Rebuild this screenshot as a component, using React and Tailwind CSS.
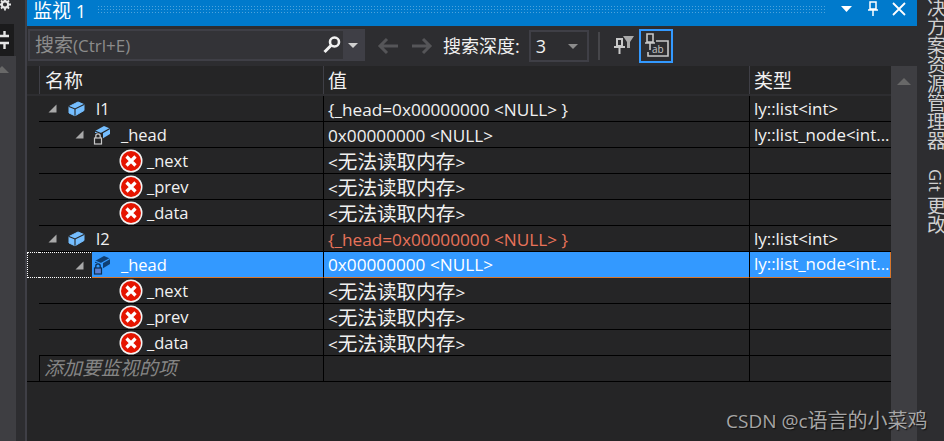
import React from 'react';

function Triangle() {
    return (
        <svg width="9" height="9" viewBox="0 0 9 9" className="shrink-0">
            <polygon points="8.5,0.5 8.5,8.5 0.5,8.5" fill="#a9a9a9" />
        </svg>
    );
}

function Cube() {
    return (
        <svg width="17" height="16" viewBox="0 0 17 16" className="shrink-0">
            <polygon points="1,5.5 10,1 16,3.5 16,9.5 7,14.8 1,12" fill="#75beff" stroke="#75beff" strokeLinejoin="round" />
            <polyline points="1,5.5 7,8 16,3.5" fill="none" stroke="#252526" strokeWidth="1.1" />
            <line x1="7" y1="8" x2="7" y2="14.8" stroke="#252526" strokeWidth="1.1" />
        </svg>
    );
}

function LockedCube({ selected }) {
    const c = selected ? '#0f3f73' : '#75beff';
    const line = selected ? '#3399ff' : '#252526';
    return (
        <svg width="18" height="20" viewBox="0 0 18 20" className="shrink-0">
            <polygon points="2,6 11,1 17,3.5 17,9 8,14.5 2,12" fill={c} />
            <polyline points="2,6 8,8.5 17,3.5" fill="none" stroke={line} strokeWidth="1.2" />
            <rect x="0" y="8" width="10" height="12" fill={selected ? '#3399ff' : '#252526'} />
            <path d="M2.8 13v-2a2.2 2.2 0 0 1 4.4 0v2" fill="none" stroke={selected ? '#0b2d52' : '#c8c8c8'} strokeWidth="1.3" />
            <rect x="1.5" y="13" width="7" height="6" fill={selected ? '#5b7fd0' : '#252526'} stroke={selected ? '#0b2d52' : '#c8c8c8'} strokeWidth="1.2" />
        </svg>
    );
}

function ErrorIcon() {
    return (
        <svg width="24" height="24" viewBox="0 0 24 24" className="shrink-0">
            <circle cx="12" cy="12" r="11.5" fill="#f4f4f4" />
            <circle cx="12" cy="12" r="10" fill="#e51400" />
            <path d="M7.5 7.5l9 9M16.5 7.5l-9 9" stroke="#fff" strokeWidth="3.2" />
        </svg>
    );
}

// CJK runs sit larger than the latin text next to them
function Cn({ children }) {
    return <span className="text-[19px]">{children}</span>;
}

function Row({ level, arrow, icon, name, value, type, valueColor = 'text-[#f1f1f1]', selected }) {
    const nudge = selected ? '' : 'pt-[2px]';
    return (
        <div className={`flex h-[26px] shrink-0 ${selected ? 'text-white' : 'text-[#f1f1f1]'}`}>
            <div className={`w-[12px] shrink-0 ${selected ? 'border-y border-l border-dotted border-white' : ''}`} />
            <div className={`w-[284px] shrink-0 flex items-center relative text-[16.5px] ${selected ? 'border-y border-r-0 border-dotted border-white' : 'border-b border-black'}`}>
                {selected && <div className="absolute left-[53px] right-0 -top-px -bottom-px bg-[#3399ff] border-b border-[#d9762b]" />}
                <div className={`relative flex items-center ${level === 0 ? 'pl-[9px]' : 'pl-[36px]'} ${arrow ? '' : 'invisible'}`}>
                    <Triangle />
                </div>
                {icon === 'cube' && <div className="relative ml-[11px]"><Cube /></div>}
                {icon === 'locked' && <div className="relative ml-[9px]"><LockedCube selected={selected} /></div>}
                {icon === 'error' && <div className="relative ml-[35px]"><ErrorIcon /></div>}
                <span className={`relative ${nudge} ${icon === 'cube' ? 'ml-[11px]' : icon === 'locked' ? 'ml-[10px]' : 'ml-[4px]'}`}>{name}</span>
            </div>
            <div className={`w-[426px] shrink-0 pl-[4px] flex items-center border-l text-[17.2px] ${selected ? 'bg-[#3399ff] border-black border-b border-b-[#d9762b]' : 'border-black border-b'} ${valueColor}`}>
                <span className={nudge}>{value}</span>
            </div>
            <div className={`flex-1 min-w-0 pl-[4px] flex items-center overflow-hidden whitespace-nowrap border-l text-[16.9px] ${selected ? 'bg-[#3399ff] border-black border-b border-b-[#d9762b] border-r border-r-[#d9762b]' : 'border-black border-b'}`}>
                <span className={nudge}>{type}</span>
            </div>
        </div>
    );
}

const NOREAD = <>&lt;<span className="text-[19.6px]">无法读取内存</span>&gt;</>;

function Children() {
    return (
        <>
            <Row level={2} icon="error" name="_next" value={NOREAD} />
            <Row level={2} icon="error" name="_prev" value={NOREAD} />
            <Row level={2} icon="error" name="_data" value={NOREAD} />
        </>
    );
}

export default function App() {
    return (
        <div className="relative w-[944px] h-[441px] flex overflow-hidden bg-[#2d2d30] text-[16px] leading-none font-['Open_Sans','Noto_Sans_CJK_SC',sans-serif] text-[#f1f1f1]">
            {/* left dock strip */}
            <div className="w-[25px] shrink-0 flex flex-col">
                <div className="h-[24px] overflow-hidden">
                    <svg width="12" height="13" viewBox="0 0 12 13">
                        <circle cx="5" cy="4.5" r="3.2" fill="none" stroke="#e6e6e6" strokeWidth="2.2" />
                        <path d="M5 -1v2M5 8v2.5M-0.5 4.5h2M8.5 4.5h2.5M1 0.5l1.5 1.5M7.5 7l1.5 1.5M9 0.5L7.5 2M2.5 7L1 8.5" stroke="#e6e6e6" strokeWidth="1.8" />
                    </svg>
                </div>
                <div className="h-[32px] w-[14px] bg-[#1b1b1c] flex items-center">
                    <svg width="10" height="20" viewBox="0 0 10 20">
                        <path d="M0 6h9M0 13h9M4.5 1v5M4.5 13v6" stroke="#e6e6e6" strokeWidth="2.4" />
                    </svg>
                </div>
                <div className="flex-1 w-[16px] bg-[#3e3e42] pt-[10px]">
                    <div className="w-0 h-0 border-x-[7px] border-x-transparent border-b-[7px] border-b-[#686868] ml-[-5px]" />
                </div>
            </div>
            <div className="w-[2px] shrink-0 bg-[#3f3f46]" />

            {/* watch panel */}
            <div className="w-[890px] shrink-0 flex flex-col">
                <div className="h-[26px] shrink-0 bg-[#007acc] flex items-center pl-[6px] text-white">
                    <span className="w-[64px] shrink-0 -mt-[3px] text-[18px]"><span className="text-[19px]">监视</span> 1</span>
                    <div className="w-[730px] h-[8px] -mt-[8px] bg-[radial-gradient(#4da3dc_1px,transparent_1px)] bg-[length:3px_3px]" />
                    <svg width="12" height="8" viewBox="0 0 12 8" className="ml-[14px] -mt-[8px]"><polygon points="0,1 11,1 5.5,7" fill="#fff" /></svg>
                    <svg width="12" height="16" viewBox="0 0 12 16" className="ml-[14px] -mt-[8px]"><path d="M3 1h6v7H3zM1 9h10M6 9v6" fill="none" stroke="#fff" strokeWidth="1.5" /></svg>
                    <svg width="14" height="14" viewBox="0 0 14 14" className="ml-[13px] -mt-[8px]"><path d="M1 1l12 12M13 1L1 13" stroke="#fff" strokeWidth="1.8" /></svg>
                </div>

                {/* toolbar */}
                <div className="h-[40px] shrink-0 flex items-center bg-[#2d2d30]">
                    <div className="ml-px w-[337px] h-[32px] bg-[#333337] border-2 border-[#3f3f46] flex items-center pl-[5px] text-[#8c8c8c] -mt-[2px]">
                        <span className="flex-1 text-[17px]"><Cn>搜索</Cn>(Ctrl+E)</span>
                        <svg width="20" height="20" viewBox="0 0 20 20" className="mr-[1px]">
                            <circle cx="12.5" cy="7" r="4.5" fill="none" stroke="#f1f1f1" strokeWidth="2.6" />
                            <path d="M9 10.5l-6.5 6.5" stroke="#f1f1f1" strokeWidth="3" />
                        </svg>
                        <div className="w-[20px] h-[32px] -my-[2px] bg-[#3f3f46] flex items-center justify-center">
                            <div className="w-0 h-0 border-x-[5px] border-x-transparent border-t-[5px] border-t-[#d0d0d0]" />
                        </div>
                    </div>
                    <svg width="24" height="20" viewBox="0 0 24 20" className="ml-[11px]"><path d="M22 10H4M11 3l-7 7 7 7" fill="none" stroke="#555558" strokeWidth="3" /></svg>
                    <svg width="24" height="20" viewBox="0 0 24 20" className="ml-[10px]"><path d="M2 10h18M13 3l7 7-7 7" fill="none" stroke="#555558" strokeWidth="3" /></svg>
                    <span className="ml-[9px] text-[18px] text-[#f1f1f1]">搜索深度:</span>
                    <div className="ml-[9px] w-[60px] h-[32px] border-2 border-[#3f3f46] flex items-center justify-between pl-[5px] pr-[9px] text-[18px]">
                        <span>3</span>
                        <div className="w-0 h-0 border-x-[5px] border-x-transparent border-t-[5px] border-t-[#8c8c8c]" />
                    </div>
                    <div className="ml-[9px] w-[2px] h-[28px] bg-[#46464a]" />
                    <svg width="24" height="24" viewBox="0 0 24 24" className="ml-[12px]">
                        <path d="M11 2h11l-4 6v6h-3V8z" fill="#a9a9a9" />
                        <path d="M5 5h5v7H5zM2 13h11M7.5 13v7" fill="none" stroke="#c8c8c8" strokeWidth="2" />
                    </svg>
                    <div className="ml-[3px] w-[34px] h-[34px] border-2 border-[#3399ff] flex items-center justify-center">
                        <svg width="26" height="28" viewBox="0 0 26 28">
                            <path d="M4 2h6v8H4zM2 11h10M7 11v7" fill="none" stroke="#c8c8c8" strokeWidth="1.6" />
                            <path d="M13 9h12v15H5v-4" fill="none" stroke="#c8c8c8" strokeWidth="1.6" />
                            <text x="9" y="21" fontSize="10" fill="#c8c8c8">ab</text>
                        </svg>
                    </div>
                </div>

                {/* table */}
                <div className="flex-1 flex bg-[#252526] min-h-0">
                    <div className="w-[864px] shrink-0 flex flex-col">
                        <div className="h-[30px] shrink-0 flex border-b-2 border-[#2d2d30] text-[#f1f1f1] text-[19px]">
                            <div className="w-[12px] shrink-0" />
                            <div className="w-[284px] shrink-0 border-l border-[#3f3f46] pl-[5px] pt-[2px] flex items-center">名称</div>
                            <div className="w-[426px] shrink-0 border-l border-[#3f3f46] pl-[4px] pt-[2px] flex items-center">值</div>
                            <div className="flex-1 border-l border-[#3f3f46] pl-[4px] pt-[2px] flex items-center">类型</div>
                        </div>
                        <Row level={0} arrow icon="cube" name="l1" value="{_head=0x00000000 <NULL> }" type="ly::list<int>" />
                        <Row level={1} arrow icon="locked" name="_head" value="0x00000000 <NULL>" type="ly::list_node<int..." />
                        <Children />
                        <Row level={0} arrow icon="cube" name="l2" value="{_head=0x00000000 <NULL> }" valueColor="text-[#e8735a]" type="ly::list<int>" />
                        <Row level={1} arrow icon="locked" name="_head" value="0x00000000 <NULL>" type="ly::list_node<int..." valueColor="text-white" selected />
                        <Children />
                        <div className="h-[26px] shrink-0 flex border-b border-black">
                            <div className="w-[12px] shrink-0" />
                            <div className="w-[284px] shrink-0 border-l border-black pl-[4px] flex items-center italic text-[19px] text-[#858585]">添加要监视的项</div>
                            <div className="w-[426px] shrink-0 border-l border-black" />
                            <div className="flex-1 border-l border-black" />
                        </div>
                    </div>
                    <div className="w-[26px] shrink-0 bg-[#3e3e42] pt-[12px] flex justify-center">
                        <div className="w-0 h-0 border-x-[7px] border-x-transparent border-b-[7px] border-b-[#686868]" />
                    </div>
                </div>
            </div>

            {/* right dock strip */}
            <div className="flex-1 min-w-0 pl-[13px] overflow-hidden text-[#d0d0d0] text-[19px]">
                <div className="flex flex-col -mt-[21px] gap-[19px]">
                    <div className="[writing-mode:vertical-rl] whitespace-nowrap">解决方案资源管理器</div>
                    <div className="[writing-mode:vertical-rl] whitespace-nowrap text-[17px]">Git <span className="text-[19px]">更改</span></div>
                </div>
            </div>

            <div className="absolute left-[726px] top-[411px] text-[19px] text-[#a6a6a6] [text-shadow:1px_1px_1px_#111]">
                CSDN @c<span className="text-[20px]">语言的小菜鸡</span>
            </div>
        </div>
    );
}
